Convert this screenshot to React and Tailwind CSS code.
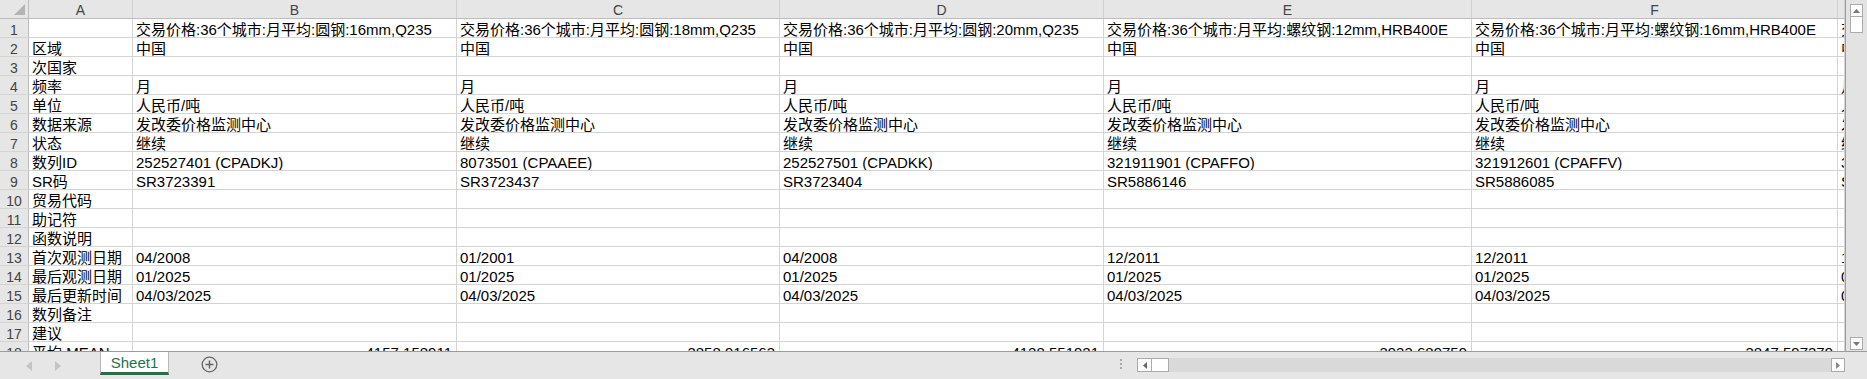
import React from "react";

const COLS = [
  { k: "A", w: "w-[104px]" },
  { k: "B", w: "w-[324px]" },
  { k: "C", w: "w-[323px]" },
  { k: "D", w: "w-[324px]" },
  { k: "E", w: "w-[368px]" },
  { k: "F", w: "w-[366px]" },
  { k: "G", w: "w-[7px]" },
];

const T1 = "交易价格:36个城市:月平均:圆钢:";
const T2 = "交易价格:36个城市:月平均:螺纹钢:";

const ROWS = [
  ["", T1 + "16mm,Q235", T1 + "18mm,Q235", T1 + "20mm,Q235", T2 + "12mm,HRB400E", T2 + "16mm,HRB400E", "交易价格"],
  ["区域", "中国", "中国", "中国", "中国", "中国", "中国"],
  ["次国家", "", "", "", "", "", ""],
  ["频率", "月", "月", "月", "月", "月", "月"],
  ["单位", "人民币/吨", "人民币/吨", "人民币/吨", "人民币/吨", "人民币/吨", "人民币/吨"],
  ["数据来源", "发改委价格监测中心", "发改委价格监测中心", "发改委价格监测中心", "发改委价格监测中心", "发改委价格监测中心", "发改委"],
  ["状态", "继续", "继续", "继续", "继续", "继续", "继续"],
  ["数列ID", "252527401 (CPADKJ)", "8073501 (CPAAEE)", "252527501 (CPADKK)", "321911901 (CPAFFO)", "321912601 (CPAFFV)", "321"],
  ["SR码", "SR3723391", "SR3723437", "SR3723404", "SR5886146", "SR5886085", "SR5"],
  ["贸易代码", "", "", "", "", "", ""],
  ["助记符", "", "", "", "", "", ""],
  ["函数说明", "", "", "", "", "", ""],
  ["首次观测日期", "04/2008", "01/2001", "04/2008", "12/2011", "12/2011", "12/2011"],
  ["最后观测日期", "01/2025", "01/2025", "01/2025", "01/2025", "01/2025", "01/2025"],
  ["最后更新时间", "04/03/2025", "04/03/2025", "04/03/2025", "04/03/2025", "04/03/2025", "04/03/2025"],
  ["数列备注", "", "", "", "", "", ""],
  ["建议", "", "", "", "", "", ""],
];

const MEAN = ["平均 MEAN", "4157.158911", "3858.916563", "4128.551921", "3933.689759", "3847.597379", ""];

const font = { fontFamily: '"Liberation Sans", "Noto Sans CJK SC", Arial, sans-serif' };

function HeaderRow() {
  return (
    <div className="flex h-[19px] shrink-0 bg-[#e6e6e6] border-b border-[#bdbdbd]">
      <div className="relative w-[29px] shrink-0 border-r border-[#bdbdbd]">
        <svg className="absolute left-0 top-0" width="28" height="18" viewBox="0 0 28 18">
          <polygon points="25,4 25,15 14,15" fill="#b4b4b4" />
        </svg>
      </div>
      {COLS.map((c) => (
        <div
          key={c.k}
          className={`${c.w} shrink-0 border-r border-[#d0d0d0] flex items-end justify-center text-[14px] leading-[15px] text-[#444] overflow-hidden`}
        >
          {c.k !== "G" ? c.k : ""}
        </div>
      ))}
    </div>
  );
}

function DataRow({ n, cells, right }) {
  return (
    <div className="flex h-[19px] shrink-0">
      <div className="w-[29px] shrink-0 bg-[#e6e6e6] border-r border-b border-r-[#bdbdbd] border-b-[#d4d4d4] flex items-end justify-center text-[14px] leading-[13px] text-[#444]">
        {n}
      </div>
      {COLS.map((c, i) => (
        <div
          key={c.k}
          className={`${c.w} shrink-0 border-r border-b border-[#d4d4d4] flex items-end overflow-hidden whitespace-nowrap text-[15px] leading-[15px] text-black ${
            right && i > 0 ? "justify-end pr-[4px]" : "pl-[3px]"
          }`}
        >
          {cells[i]}
        </div>
      ))}
    </div>
  );
}

function Grid() {
  return (
    <div className="flex flex-col w-[1846px] h-[351px] overflow-hidden border-r border-[#9c9c9c] bg-white">
      <HeaderRow />
      {ROWS.map((r, i) => (
        <DataRow key={i} n={i + 1} cells={r} />
      ))}
      <DataRow n={18} cells={MEAN} right />
    </div>
  );
}

function VScroll() {
  return (
    <div className="flex flex-col w-[21px] h-[351px] bg-[#e3e3e3] pl-[4px]">
      <div className="mt-[4px] w-[13px] h-[13px] bg-white border border-[#ababab] flex items-center justify-center">
        <svg width="7" height="4" viewBox="0 0 7 4">
          <polygon points="0,4 3.5,0 7,4" fill="#777" />
        </svg>
      </div>
      <div className="w-[13px] h-[16px] bg-white border border-t-0 border-[#ababab]" />
      <div className="flex-1" />
      <div className="mb-[1px] w-[13px] h-[13px] bg-white border border-[#ababab] flex items-center justify-center">
        <svg width="7" height="4" viewBox="0 0 7 4">
          <polygon points="0,0 3.5,4 7,0" fill="#777" />
        </svg>
      </div>
    </div>
  );
}

function TabBar() {
  return (
    <div className="flex h-[28px] shrink-0 bg-[#e6e6e6] border-t border-[#9c9c9c]">
      <div className="w-[100px] shrink-0 flex items-center">
        <svg className="ml-[26px]" width="6" height="10" viewBox="0 0 6 10">
          <polygon points="6,0 0,5 6,10" fill="#c4c4c4" />
        </svg>
        <svg className="ml-[23px]" width="6" height="10" viewBox="0 0 6 10">
          <polygon points="0,0 6,5 0,10" fill="#c4c4c4" />
        </svg>
      </div>
      <div className="w-[69px] shrink-0 h-[23px] bg-white border-x border-[#b8b8b8] border-b-[3px] border-b-[#217346] flex items-center justify-center text-[15px] leading-[15px] text-[#217346] pt-[1px]">
        Sheet1
      </div>
      <div className="w-[944px] shrink-0 flex items-center">
        <svg className="ml-[32px] mb-[2px]" width="17" height="17" viewBox="0 0 17 17">
          <circle cx="8.5" cy="8.5" r="7.3" fill="none" stroke="#666" strokeWidth="1.3" />
          <line x1="4.5" y1="8.5" x2="12.5" y2="8.5" stroke="#666" strokeWidth="1.5" />
          <line x1="8.5" y1="4.5" x2="8.5" y2="12.5" stroke="#666" strokeWidth="1.5" />
        </svg>
      </div>
      <div className="w-[24px] shrink-0 flex flex-col items-center justify-center gap-[2px] pr-[8px] pb-[4px]">
        <div className="w-[2px] h-[2px] bg-[#a8a8a8]" />
        <div className="w-[2px] h-[2px] bg-[#a8a8a8]" />
        <div className="w-[2px] h-[2px] bg-[#a8a8a8]" />
      </div>
      <div className="w-[708px] shrink-0 pt-[6px]">
        <div className="flex h-[14px] bg-[#d9d9d9]">
          <div className="w-[15px] h-[14px] bg-white border border-[#ababab] flex items-center justify-center">
            <svg width="4" height="7" viewBox="0 0 4 7">
              <polygon points="4,0 0,3.5 4,7" fill="#666" />
            </svg>
          </div>
          <div className="w-[17px] h-[14px] bg-white border border-l-0 border-[#ababab]" />
          <div className="flex-1" />
          <div className="w-[14px] h-[14px] bg-white border border-[#ababab] flex items-center justify-center">
            <svg width="4" height="7" viewBox="0 0 4 7">
              <polygon points="0,0 4,3.5 0,7" fill="#888" />
            </svg>
          </div>
        </div>
      </div>
      <div className="flex-1" />
    </div>
  );
}

export default function App() {
  return (
    <div className="w-[1867px] h-[379px] overflow-hidden flex flex-col bg-white" style={font}>
      <div className="flex h-[351px] shrink-0">
        <Grid />
        <VScroll />
      </div>
      <TabBar />
    </div>
  );
}
